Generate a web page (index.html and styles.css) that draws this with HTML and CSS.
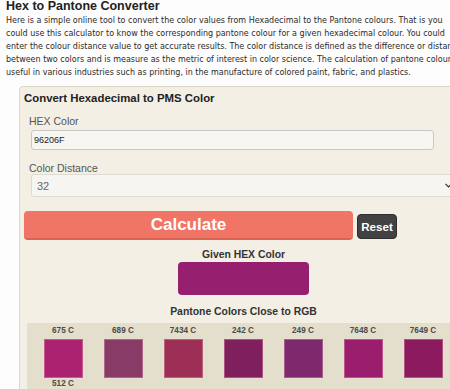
FILE: index.html
```html
<!DOCTYPE html>
<html lang="en">
<head>
    <meta charset="UTF-8">
    <meta name="viewport" content="width=device-width, initial-scale=1.0">
    <title>Hex to Pantone Converter</title>
    <link rel="stylesheet" href="styles.css">
</head>
<body>
    <h1 class="title">Hex to Pantone Converter</h1>
    <p class="intro">Here is a simple online tool to convert the color values from Hexadecimal to the Pantone colours. That is you<br>could use this calculator to know the corresponding pantone colour for a given hexadecimal colour. You could<br>enter the colour distance value to get accurate results. The color distance is defined as the difference or distance<br>between two colors and is measure as the metric of interest in color science. The calculation of pantone colour is<br>useful in various industries such as printing, in the manufacture of colored paint, fabric, and plastics.</p>

    <div class="tool">
        <h2>Convert Hexadecimal to PMS Color</h2>
        <div class="form-group">
            <label for="hex">HEX Color</label>
            <input type="text" id="hex" value="96206F">
        </div>
        <div class="form-group">
            <label for="distance">Color Distance</label>
            <div class="select-wrap">
                <select id="distance">
                    <option>32</option>
                </select>
                <svg class="chevron" width="7" height="5" viewBox="0 0 7 5"><path d="M0.5 0.8 L3.5 3.8 L6.5 0.8" fill="none" stroke="#333" stroke-width="1.2"/></svg>
            </div>
        </div>
        <div class="buttons">
            <button class="calc">Calculate</button>
            <button class="reset">Reset</button>
        </div>

        <div class="result">
            <h3>Given HEX Color</h3>
            <div class="given"></div>
            <h3 class="close-title">Pantone Colors Close to RGB</h3>
            <div class="matches">
                <div class="match"><span>675 C</span><div class="chip" style="background:#ab2271"></div></div>
                <div class="match"><span>689 C</span><div class="chip" style="background:#883b66"></div></div>
                <div class="match"><span>7434 C</span><div class="chip" style="background:#9d2e56"></div></div>
                <div class="match"><span>242 C</span><div class="chip" style="background:#7f1f5d"></div></div>
                <div class="match"><span>249 C</span><div class="chip" style="background:#7e296d"></div></div>
                <div class="match"><span>7648 C</span><div class="chip" style="background:#9b1e6e"></div></div>
                <div class="match"><span>7649 C</span><div class="chip" style="background:#8b1a5e"></div></div>
                <div class="match"><span>512 C</span><div class="chip" style="background:#80276f"></div></div>
            </div>
        </div>
    </div>
</body>
</html>
```

FILE: styles.css
```css
body {
    margin: 0;
    padding: 0 0 0 6px;
    background-color: #fdfdfd;
    font-family: "Liberation Sans", Arial, sans-serif;
    overflow: hidden;
    width: 600px;
}
.title {
    margin: 0;
    font-size: 12.5px;
    line-height: 12px;
    font-weight: bold;
    color: #222;
}
.intro {
    margin: 2px 0 0;
    font-family: "DejaVu Sans", Verdana, sans-serif;
    font-size: 8px;
    line-height: 13px;
    color: #2b2b2b;
    white-space: nowrap;
}
.tool {
    margin: 7px 0 0 13px;
    width: 439px;
    padding: 5px 4px 0;
    background: #f3efe5;
    border: 1px solid #ddd7c6;
    border-radius: 4px;
}
.tool h2 {
    margin: 0;
    font-size: 11.4px;
    line-height: 13px;
    color: #222;
}
.form-group {
    padding-left: 5px;
}
.form-group label {
    display: block;
    margin-top: 10px;
    font-size: 10.5px;
    line-height: 12px;
    color: #555;
}
.form-group + .form-group label {
    margin-top: 12px;
}
input {
    display: block;
    margin: 3px 0 0 2px;
    width: 403px;
    height: 20px;
    box-sizing: border-box;
    padding: 0 2px;
    font-family: "Liberation Sans", Arial, sans-serif;
    font-size: 9px;
    color: #222;
    background: #f7f6f3;
    border: 1px solid #c9c9c9;
    border-radius: 3px;
}
.select-wrap {
    position: relative;
    margin-left: 2px;
    width: 432px;
}
select {
    display: block;
    width: 100%;
    height: 23px;
    padding: 0 5px;
    appearance: none;
    font-family: "Liberation Sans", Arial, sans-serif;
    font-size: 11px;
    color: #666;
    background: #f6f5f1;
    border: 1px solid #dedbd3;
    border-radius: 3px;
}
.chevron {
    position: absolute;
    left: 414px;
    top: 9px;
}
.buttons {
    display: flex;
    align-items: flex-end;
    gap: 4px;
    margin-top: 14px;
}
.calc {
    width: 329px;
    height: 29px;
    padding: 0;
    font-family: "Liberation Sans", Arial, sans-serif;
    font-size: 17px;
    font-weight: bold;
    color: #fff;
    background: #f17566;
    border: none;
    border-bottom: 2px solid #dc6252;
    border-radius: 4px;
}
.reset {
    width: 40px;
    height: 25px;
    margin-bottom: 1px;
    padding: 0;
    font-family: "Liberation Sans", Arial, sans-serif;
    font-size: 11.6px;
    font-weight: bold;
    color: #fff;
    background: #424242;
    border: 1px solid #2e2e2e;
    border-radius: 4px;
}
.result {
    text-align: center;
}
.result h3 {
    margin: 9px 0 0;
    font-size: 10.4px;
    line-height: 12px;
    color: #333;
}
.given {
    width: 131px;
    height: 33px;
    margin: 1px auto 0;
    background: #96206f;
    border-radius: 4px;
}
.result .close-title {
    margin-top: 11px;
}
.matches {
    display: flex;
    flex-wrap: wrap;
    margin: 5px 0 0 3px;
    padding: 3px 0 0 6px;
    background: #e4decd;
    text-align: center;
}
.match {
    width: 60px;
    margin-bottom: 1px;
}
.match span {
    display: block;
    font-size: 8.2px;
    line-height: 10px;
    font-weight: bold;
    color: #4a4a4a;
}
.chip {
    width: 39px;
    height: 39px;
    margin: 3px auto 0;
    box-sizing: border-box;
    border: 1px solid rgba(255, 190, 200, 0.35);
}
```
